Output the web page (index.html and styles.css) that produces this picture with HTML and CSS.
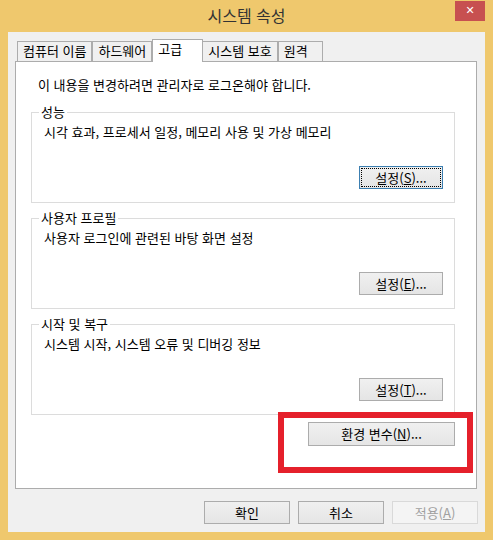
FILE: index.html
```html
<!DOCTYPE html>
<html lang="ko">
<head>
    <meta charset="UTF-8">
    <meta name="viewport" content="width=device-width, initial-scale=1.0">
    <title>시스템 속성</title>
    <link rel="stylesheet" href="styles.css">
</head>
<body>
    <div class="window">
        <div class="titlebar">
            <span></span>
            <span class="title">시스템 속성</span>
            <button class="close">&#x2715;</button>
        </div>
        <div class="client">
            <div class="tabs">
                <div class="tab">컴퓨터 이름</div>
                <div class="tab">하드웨어</div>
                <div class="tab active">고급</div>
                <div class="tab">시스템 보호</div>
                <div class="tab">원격</div>
            </div>
            <div class="panel">
                <p class="note">이 내용을 변경하려면 관리자로 로그온해야 합니다.</p>
                <fieldset class="group">
                    <legend>성능</legend>
                    <p class="desc">시각 효과, 프로세서 일정, 메모리 사용 및 가상 메모리</p>
                    <div class="row">
                        <button class="button default">설정(<u>S</u>)...</button>
                    </div>
                </fieldset>
                <fieldset class="group">
                    <legend>사용자 프로필</legend>
                    <p class="desc">사용자 로그인에 관련된 바탕 화면 설정</p>
                    <div class="row">
                        <button class="button">설정(<u>E</u>)...</button>
                    </div>
                </fieldset>
                <fieldset class="group">
                    <legend>시작 및 복구</legend>
                    <p class="desc">시스템 시작, 시스템 오류 및 디버깅 정보</p>
                    <div class="row">
                        <button class="button">설정(<u>T</u>)...</button>
                    </div>
                </fieldset>
                <div class="row envrow">
                    <button class="button wide">환경 변수(<u>N</u>)...</button>
                </div>
            </div>
            <div class="bottom">
                <button class="button big">확인</button>
                <button class="button big">취소</button>
                <button class="button big" disabled>적용(<u>A</u>)</button>
            </div>
        </div>
        <div class="marker"></div>
    </div>
</body>
</html>
```

FILE: styles.css
```css
body {
    margin: 0;
    padding: 0;
    font-family: "Noto Sans CJK KR", "Liberation Sans", sans-serif;
    font-size: 13px;
    color: #000;
}
.window {
    position: relative;
    width: 493px;
    height: 540px;
    background-color: #efc86d;
    display: flex;
    flex-direction: column;
}
.titlebar {
    height: 32px;
    display: grid;
    grid-template-columns: 1fr auto 1fr;
    align-items: start;
}
.title {
    font-size: 16px;
    line-height: 30px;
    color: #333;
}
.close {
    justify-self: end;
    width: 30px;
    height: 20px;
    margin: 1px 8px 0 0;
    padding: 0;
    border: none;
    background-color: #c75050;
    color: #fff;
    font-size: 11px;
    line-height: 20px;
    font-weight: bold;
    font-family: "DejaVu Sans", sans-serif;
}
.client {
    flex: 1;
    margin: 0 8px 8px 8px;
    background-color: #f0f0f0;
    padding: 7px 8px 8px 7px;
    display: flex;
    flex-direction: column;
}
.tabs {
    height: 22px;
    display: flex;
    align-items: flex-end;
    padding-left: 2px;
}
.tab {
    box-sizing: border-box;
    height: 20px;
    min-width: 45px;
    padding: 0 5px;
    border: 1px solid #acacac;
    border-bottom: none;
    background-color: #f0f0f0;
    line-height: 18px;
}
.tab.active {
    position: relative;
    z-index: 1;
    width: 51px;
    height: 23px;
    margin: 0 -1px -1px 0;
    background-color: #fff;
    line-height: 17px;
}
.panel {
    box-sizing: border-box;
    height: 428px;
    border: 1px solid #acacac;
    background-color: #fff;
    padding: 15px 21px 0 15px;
}
.note {
    margin: 0 0 11px 7px;
    line-height: 16px;
}
.group {
    margin: 0 0 7px 0;
    padding: 0 11px 13px 12px;
    border: 1px solid #dcdcdc;
    min-width: 0;
}
.group legend {
    padding: 0 2px;
    margin-left: -5px;
    line-height: 16px;
}
.desc {
    margin: 4px 0 0 0;
    line-height: 16px;
}
.row {
    display: flex;
    justify-content: flex-end;
    margin-top: 26px;
}
.envrow {
    margin-top: 7px;
}
.button {
    box-sizing: border-box;
    height: 23px;
    width: 84px;
    padding: 0;
    border: 1px solid #acacac;
    background: linear-gradient(#f0f0f0, #e5e5e5);
    font-family: inherit;
    font-size: 13px;
    color: #000;
    line-height: 20px;
}
.button u {
    text-underline-offset: 1px;
}
.button.default {
    border-color: #3c7fb1;
    outline: 1px dotted #000;
    outline-offset: -3px;
}
.button.wide {
    width: 147px;
    height: 24px;
}
.bottom {
    display: flex;
    justify-content: flex-end;
    gap: 8px;
    margin: 12px -1px 0 0;
}
.button.big {
    width: 86px;
}
.button:disabled {
    border-color: #d9d9d9;
    background: #f4f4f4;
    color: #a0a0a0;
}
.marker {
    position: absolute;
    left: 278px;
    top: 412px;
    width: 183px;
    height: 49px;
    border: 6px solid #e5202b;
}
```
